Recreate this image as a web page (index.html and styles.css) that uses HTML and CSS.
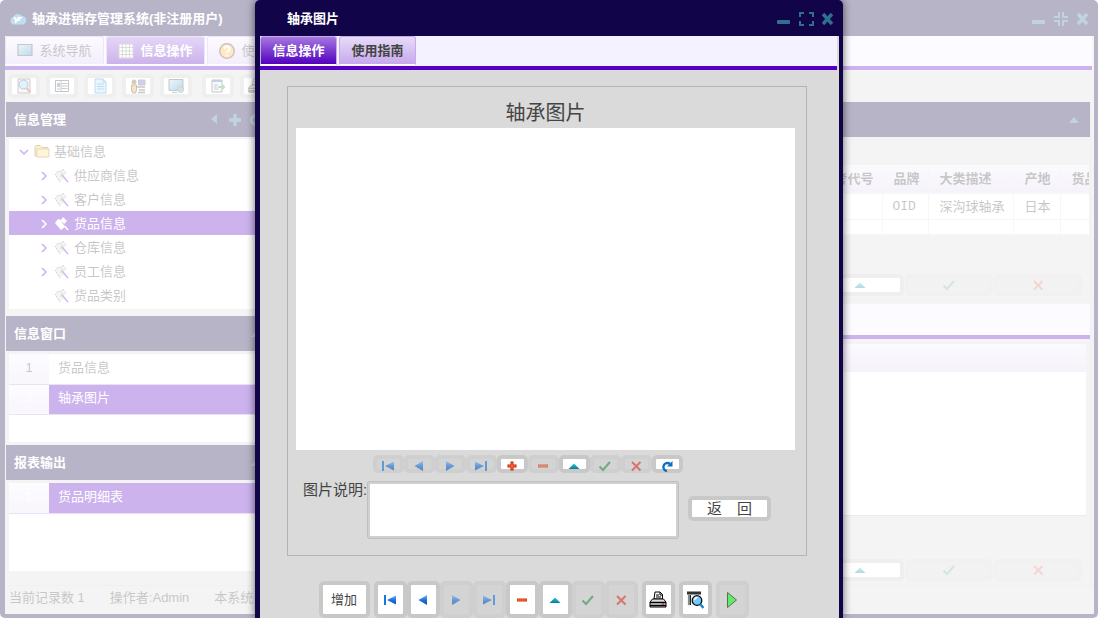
FILE: index.html
```html
<!DOCTYPE html>
<html lang="zh-CN">
<head>
<meta charset="utf-8">
<title>轴承进销存管理系统</title>
<link rel="stylesheet" href="styles.css">
</head>
<body>
<svg class="sprite" aria-hidden="true">
  <defs>
    <linearGradient id="gblue" x1="0" y1="0" x2="0" y2="1"><stop offset="0" stop-color="#6db7f5"/><stop offset=".5" stop-color="#1c74d8"/><stop offset="1" stop-color="#0b4fae"/></linearGradient>
    <linearGradient id="gteal" x1="0" y1="0" x2="0" y2="1"><stop offset="0" stop-color="#2ec4dc"/><stop offset="1" stop-color="#067c96"/></linearGradient>
    <linearGradient id="gscreen" x1="0" y1="0" x2="1" y2="1"><stop offset="0" stop-color="#b5e2fa"/><stop offset="1" stop-color="#2c82be"/></linearGradient>
  </defs>
  <symbol id="first" viewBox="0 0 14 14"><path d="M1 2h2v10H1z" fill="#1478dc"/><path d="M13 2.500v9L4 7z" fill="url(#gblue)"/></symbol>
  <symbol id="prev" viewBox="0 0 14 14"><path d="M11 2v10L2.500 7z" fill="url(#gblue)"/></symbol>
  <symbol id="next" viewBox="0 0 14 14"><path d="M3 2v10l8.500-5z" fill="url(#gblue)"/></symbol>
  <symbol id="last" viewBox="0 0 14 14"><path d="M11 2h2v10h-2z" fill="#1478dc"/><path d="M1 2.500v9L10 7z" fill="url(#gblue)"/></symbol>
  <symbol id="add" viewBox="0 0 14 14"><path d="M5.500 2.500h3v3h3v3h-3v3h-3v-3h-3v-3h3z" fill="#c41e0a"/><path d="M7 3.500v7M3.500 7h7" stroke="#ff8a3c"/></symbol>
  <symbol id="minus" viewBox="0 0 14 14"><path d="M2 5.500h10v3H2z" fill="#c92a06"/><path d="M2.500 7h9" stroke="#ff8a3c"/></symbol>
  <symbol id="up" viewBox="0 0 14 14"><path d="M7 4.500 12.500 10h-11z" fill="url(#gteal)"/></symbol>
  <symbol id="check" viewBox="0 0 14 14"><path d="m1.500 7.500 3.500 3.500 7-8" fill="none" stroke="#2f8f55" stroke-width="2"/></symbol>
  <symbol id="cross" viewBox="0 0 14 14"><path d="m3 3 8.500 8.500m0-8.500-8.500 8.500" fill="none" stroke="#d8392b" stroke-width="2"/></symbol>
  <symbol id="refresh" viewBox="0 0 14 14"><path d="M7 12a4 4 0 1 1 3-7" fill="none" stroke="#0c6fc4" stroke-width="2.400"/><path d="M12.500 2v5.500H7z" fill="#0c6fc4"/></symbol>
  <symbol id="printer" viewBox="0 0 18 18"><path d="M5 8 6 1h5l2.500 2.500V8z" fill="#fff" stroke="#000"/><path d="M7 4h3M7 6h5M11 1v3h3" fill="none" stroke="#000"/><path d="M3.500 8h11l2.500 3v5H1v-5z" fill="#ddd" stroke="#000"/><path d="M1 11.500h16M1 14.500h16" stroke="#000" stroke-width="1.300"/><path d="M13 13h2" stroke="#e00"/></symbol>
  <symbol id="preview" viewBox="0 0 18 18"><path d="M1 1h14v14H1z" fill="#f2f2f2"/><path d="M1 2h14" stroke="#333" stroke-width="3"/><path d="M2 4h2v10H2z" fill="#8a8a8a"/><path d="M4.500 4v10" stroke="#222"/><circle cx="11" cy="9.500" r="4.800" fill="#75c8fa" stroke="#111" stroke-width="1.300"/><path d="M8.500 9a3 3 0 0 1 3-2.500" stroke="#fff" fill="none" stroke-width="1.500"/><path d="m14 13 3.500 4" stroke="#1184cc" stroke-width="2.400"/></symbol>
  <symbol id="play" viewBox="0 0 18 18"><path d="M4.500 1.500v15L13.500 9z" fill="#63ea67" stroke="#57705a"/></symbol>
  <symbol id="min" viewBox="0 0 16 16"><rect x="1" y="9" width="13" height="4" rx="1" fill="currentColor"/></symbol>
  <symbol id="max" viewBox="0 0 16 16"><path d="M2 6V2h4M11 2h4v4M15 10v4h-4M6 14H2v-4" fill="none" stroke="currentColor" stroke-width="2"/></symbol>
  <symbol id="restore" viewBox="0 0 16 16"><path d="M1 6h5V1M10 1v5h5M15 10h-5v5M6 15v-5H1" fill="none" stroke="currentColor" stroke-width="2"/></symbol>
  <symbol id="close" viewBox="0 0 16 16"><path d="m3 3 9 10m0-10-9 10" fill="none" stroke="currentColor" stroke-width="3.400"/></symbol>
  <symbol id="collapse" viewBox="0 0 16 16"><path d="m8 5 5 6H3z" fill="currentColor"/></symbol>
  <symbol id="left" viewBox="0 0 16 16"><path d="M11 2v10L5 7z" fill="currentColor"/></symbol>
  <symbol id="plus" viewBox="0 0 16 16"><path d="M8 2v12M2 8h12" stroke="currentColor" stroke-width="3.400"/></symbol>
  <symbol id="ring" viewBox="0 0 16 16"><circle cx="8" cy="8" r="4.500" fill="none" stroke="currentColor" stroke-width="3"/></symbol>
  <symbol id="screen" viewBox="0 0 16 16"><path d="M1 1.500h14v11H1z" fill="url(#gscreen)" stroke="#444" stroke-width="1.200"/></symbol>
  <symbol id="table" viewBox="0 0 16 16"><rect x="1" y="1" width="14" height="14" fill="#fff" stroke="#888"/><path d="M4.500 1v14M8 1v14M11.500 1v14M1 4.500h14M1 8h14M1 11.500h14" stroke="#888"/></symbol>
  <symbol id="help" viewBox="0 0 16 16"><circle cx="8" cy="8" r="7.300" fill="#fbb53c" stroke="#43231b" stroke-width="1.300"/><path d="M5.500 6a2.500 2.500 0 1 1 3.800 2Q8 8.700 8 10M8 11.500v1.800" fill="none" stroke="#fff" stroke-width="1.900"/></symbol>
  <symbol id="search" viewBox="0 0 16 16"><path d="M2 1h12v14H2z" fill="#e6e6e6" stroke="#555"/><circle cx="7.500" cy="6.500" r="4.500" fill="#92d2f5" stroke="#446"/><path d="m10.500 10 4 4.500" stroke="#c4402d" stroke-width="2.400"/></symbol>
  <symbol id="list" viewBox="0 0 16 16"><path d="M1.500 2.500h13v11h-13z" fill="#fff" stroke="#444"/><path d="M3 5h3v4H3z" fill="#2f6fb5"/><path d="M3 11h3M7.500 5.500h6M7.500 8h6M7.500 10.500h6M7 3v10" stroke="#555"/></symbol>
  <symbol id="doc" viewBox="0 0 16 16"><path d="M3 1h8l3 3v11H3z" fill="#b0e0ff" stroke="#2c86c6"/><path d="M5 6h7M5 8.500h7M5 11h7M11 1v3h3" fill="none" stroke="#2c86c6"/></symbol>
  <symbol id="user" viewBox="0 0 16 16"><circle cx="4" cy="4" r="2.500" fill="#7b4b1c"/><path d="M1.500 7h5v5l-1 3h-3l-1-3z" fill="#e7a03f" stroke="#543611"/><path d="M8.500 2h6.500v5H8.500z" fill="#5a60cc" stroke="#555"/><path d="M7 9h8M9 12h6M8 14.500h7" stroke="#444" stroke-width="1.500"/></symbol>
  <symbol id="globe" viewBox="0 0 16 16"><path d="M1 1.500h14v11H1z" fill="url(#gscreen)" stroke="#444"/><path d="M4 14.500h5" stroke="#555"/><circle cx="12.500" cy="11.500" r="3" fill="#64b95c" stroke="#6d50b4"/></symbol>
  <symbol id="export" viewBox="0 0 16 16"><path d="M2 2h10v12H2z" fill="#eee" stroke="#444"/><path d="M2 3h10" stroke="#266ca0" stroke-width="2"/><path d="M4 7h4M4 9h3M4 11h4" stroke="#555"/><path d="M8 8h4V5.500L15.500 9 12 12.500V10H8z" fill="#2b9f55"/></symbol>
  <symbol id="folder" viewBox="0 0 16 16"><path d="M1 12V2.500L2 1.500h4l2 2h6V12z" fill="#fbc94a" stroke="#8c641b"/><path d="M3 13V5h12v8z" fill="#ffe27a" stroke="#a4751c"/></symbol>
  <symbol id="node" viewBox="0 0 16 16"><path d="m1 7 3-4 3 1 2-3 2 4-2 3 1 3-4 3z" fill="#ddd"/><path d="m1 7 3-4 3 1 2-3 3 4M2 8l4 6" fill="none" stroke="#666" stroke-dasharray="2 1"/><path d="m8 7 6 7" stroke="#7c14c8" stroke-width="1.600"/><path d="M7 9V6h4" stroke="#888" fill="none"/></symbol>
  <symbol id="selnode" viewBox="0 0 16 16"><path d="m1 7 3-4 3 1 2-3 4 4-3 3 1 3-4 3z" fill="#fff"/><path d="m8 7 6 7" stroke="#fff" stroke-width="1.500"/><path d="m8 6 3 4" stroke="#5700c5"/></symbol>
  <symbol id="open" viewBox="0 0 10 10"><path d="m1 3 4 4 4-4" fill="none" stroke="currentColor" stroke-width="1.500"/></symbol>
  <symbol id="closed" viewBox="0 0 10 10"><path d="m3 1 4 4-4 4" fill="none" stroke="currentColor" stroke-width="1.500"/></symbol>
  <symbol id="logo" viewBox="0 0 16 16"><path d="M4 13.500a3.800 3.800 0 0 1-.5-7.500A5 5 0 0 1 12 5a4.200 4.200 0 0 1 0 8.500z" fill="#2795cf"/><path d="m4 6 2.500 4M9 6l-4 6M9 10V8q1-2 3-1" fill="none" stroke="#fff" stroke-width="1.800"/></symbol>
</svg>

<div class="desktop">
  <div class="window">
    <header class="titlebar">
      <svg class="i16"><use href="#logo"/></svg>
      <h1 class="title">轴承进销存管理系统(非注册用户)</h1>
      <div class="win-tools">
        <button class="tool" aria-label="最小化"><svg class="i16"><use href="#min"/></svg></button>
        <button class="tool" aria-label="还原"><svg class="i16"><use href="#restore"/></svg></button>
        <button class="tool" aria-label="关闭"><svg class="i16"><use href="#close"/></svg></button>
      </div>
    </header>
    <nav class="tabs main-tabs">
      <button class="tab plain"><svg class="i16"><use href="#screen"/></svg>系统导航</button>
      <button class="tab active"><svg class="i16"><use href="#table"/></svg>信息操作</button>
      <button class="tab plain"><svg class="i16"><use href="#help"/></svg>使用指南</button>
    </nav>
    <div class="iconbar">
      <button class="btn" aria-label="查询"><svg class="i16"><use href="#search"/></svg></button>
      <button class="btn" aria-label="列表"><svg class="i16"><use href="#list"/></svg></button>
      <button class="btn" aria-label="文档"><svg class="i16"><use href="#doc"/></svg></button>
      <button class="btn" aria-label="用户"><svg class="i16"><use href="#user"/></svg></button>
      <button class="btn" aria-label="网络"><svg class="i16"><use href="#globe"/></svg></button>
      <button class="btn split" aria-label="导出"><svg class="i16"><use href="#export"/></svg></button>
      <button class="btn" aria-label="打印"><svg class="i16"><use href="#printer"/></svg></button>
    </div>
    <div class="workspace">
      <aside class="sidebar">
        <section class="panel tree-panel">
          <header class="panel-head"><h2 class="panel-title">信息管理</h2>
            <button class="tool" aria-label="收起"><svg class="i16"><use href="#left"/></svg></button>
            <button class="tool" aria-label="展开全部"><svg class="i16"><use href="#plus"/></svg></button>
            <button class="tool" aria-label="刷新"><svg class="i16"><use href="#ring"/></svg></button>
          </header>
          <ul class="tree">
            <li class="node root"><svg class="arrow"><use href="#open"/></svg><svg class="i16"><use href="#folder"/></svg>基础信息</li>
            <li class="node"><svg class="arrow"><use href="#closed"/></svg><svg class="i16"><use href="#node"/></svg>供应商信息</li>
            <li class="node"><svg class="arrow"><use href="#closed"/></svg><svg class="i16"><use href="#node"/></svg>客户信息</li>
            <li class="node selected"><svg class="arrow"><use href="#closed"/></svg><svg class="i16"><use href="#selnode"/></svg>货品信息</li>
            <li class="node"><svg class="arrow"><use href="#closed"/></svg><svg class="i16"><use href="#node"/></svg>仓库信息</li>
            <li class="node"><svg class="arrow"><use href="#closed"/></svg><svg class="i16"><use href="#node"/></svg>员工信息</li>
            <li class="node"><svg class="arrow"></svg><svg class="i16"><use href="#node"/></svg>货品类别</li>
          </ul>
        </section>
        <section class="panel">
          <header class="panel-head"><h2 class="panel-title">信息窗口</h2><button class="tool" aria-label="收起"><svg class="i16"><use href="#collapse"/></svg></button></header>
          <div class="list-box">
            <table class="list">
              <tr><td class="num">1</td><td>货品信息</td></tr>
              <tr class="selected"><td class="num">2</td><td>轴承图片</td></tr>
            </table>
          </div>
        </section>
        <section class="panel">
          <header class="panel-head"><h2 class="panel-title">报表输出</h2><button class="tool" aria-label="收起"><svg class="i16"><use href="#collapse"/></svg></button></header>
          <div class="list-box">
            <table class="list">
              <tr class="selected"><td class="num">1</td><td>货品明细表</td></tr>
            </table>
          </div>
        </section>
      </aside>
      <main class="content">
        <section class="card">
          <header class="panel-head"><button class="tool" aria-label="收起"><svg class="i16"><use href="#collapse"/></svg></button></header>
          <div class="grid-box">
            <table class="grid">
              <colgroup><col><col class="c-brand"><col class="c-desc"><col class="c-origin"><col class="c-rest"></colgroup>
              <thead><tr><th class="end">参考代号</th><th>品牌</th><th>大类描述</th><th>产地</th><th>货品</th></tr></thead>
              <tbody>
                <tr><td></td><td class="code">OID</td><td>深沟球轴承</td><td>日本</td><td></td></tr>
                <tr class="short"><td></td><td></td><td></td><td></td><td></td></tr>
              </tbody>
            </table>
          </div>
          <div class="wide-actions">
            <button class="btn" aria-label="编辑"><svg class="i14"><use href="#up"/></svg></button>
            <button class="btn" disabled aria-label="保存"><svg class="i14"><use href="#check"/></svg></button>
            <button class="btn" disabled aria-label="取消"><svg class="i14"><use href="#cross"/></svg></button>
          </div>
        </section>
        <section class="card detail">
          <div class="tabs sub-tabs"></div>
          <div class="detail-grid"><div class="detail-head"></div></div>
          <div class="wide-actions">
            <button class="btn" aria-label="编辑明细"><svg class="i14"><use href="#up"/></svg></button>
            <button class="btn" disabled aria-label="保存明细"><svg class="i14"><use href="#check"/></svg></button>
            <button class="btn" disabled aria-label="取消明细"><svg class="i14"><use href="#cross"/></svg></button>
          </div>
        </section>
      </main>
    </div>
    <footer class="status"><span>当前记录数 1</span><span>操作者:Admin</span><span>本系统</span></footer>
  </div>

  <div class="backdrop">
    <div class="dialog" role="dialog" aria-labelledby="dlg-title">
      <header class="titlebar dialog-bar">
        <h2 class="title" id="dlg-title">轴承图片</h2>
        <div class="win-tools">
          <button class="tool" aria-label="最小化"><svg class="i16"><use href="#min"/></svg></button>
          <button class="tool" aria-label="最大化"><svg class="i16"><use href="#max"/></svg></button>
          <button class="tool" aria-label="关闭"><svg class="i16"><use href="#close"/></svg></button>
        </div>
      </header>
      <nav class="tabs dialog-tabs">
        <button class="tab active">信息操作</button>
        <button class="tab">使用指南</button>
      </nav>
      <div class="dialog-body">
        <div class="frame">
          <h3 class="heading">轴承图片</h3>
          <div class="picture"></div>
          <div class="mini-bar">
            <button class="btn" disabled aria-label="首条"><svg class="i14"><use href="#first"/></svg></button>
            <button class="btn" disabled aria-label="上一条"><svg class="i14"><use href="#prev"/></svg></button>
            <button class="btn" disabled aria-label="下一条"><svg class="i14"><use href="#next"/></svg></button>
            <button class="btn" disabled aria-label="末条"><svg class="i14"><use href="#last"/></svg></button>
            <button class="btn" aria-label="新增"><svg class="i14"><use href="#add"/></svg></button>
            <button class="btn" disabled aria-label="删除"><svg class="i14"><use href="#minus"/></svg></button>
            <button class="btn" aria-label="编辑"><svg class="i14"><use href="#up"/></svg></button>
            <button class="btn" disabled aria-label="保存"><svg class="i14"><use href="#check"/></svg></button>
            <button class="btn" disabled aria-label="取消"><svg class="i14"><use href="#cross"/></svg></button>
            <button class="btn" aria-label="刷新"><svg class="i14"><use href="#refresh"/></svg></button>
          </div>
          <div class="note-row">
            <label class="note-label" for="note">图片说明:</label>
            <textarea class="note" id="note"></textarea>
            <button class="btn back"><span>返</span><span>回</span></button>
          </div>
        </div>
        <div class="action-bar">
          <button class="btn text">增加</button>
          <button class="btn" aria-label="首条记录"><svg class="i14"><use href="#first"/></svg></button>
          <button class="btn" aria-label="上一条记录"><svg class="i14"><use href="#prev"/></svg></button>
          <button class="btn" disabled aria-label="下一条记录"><svg class="i14"><use href="#next"/></svg></button>
          <button class="btn" disabled aria-label="末条记录"><svg class="i14"><use href="#last"/></svg></button>
          <button class="btn" aria-label="删除记录"><svg class="i14"><use href="#minus"/></svg></button>
          <button class="btn" aria-label="编辑记录"><svg class="i14"><use href="#up"/></svg></button>
          <button class="btn" disabled aria-label="保存记录"><svg class="i14"><use href="#check"/></svg></button>
          <button class="btn" disabled aria-label="取消编辑"><svg class="i14"><use href="#cross"/></svg></button>
          <button class="btn apart" aria-label="打印"><svg class="i18"><use href="#printer"/></svg></button>
          <button class="btn apart" aria-label="预览"><svg class="i18"><use href="#preview"/></svg></button>
          <button class="btn apart run" aria-label="运行"><svg class="i18"><use href="#play"/></svg></button>
        </div>
      </div>
    </div>
  </div>
</div>
</body>
</html>
```
FILE: styles.css
```css
:root {
  --navy: #110449;
  --violet: #5400c4;
  --grey: #dadada;
  --edge: #c8c8c8;
  --teal: #2f708f;
}
* { box-sizing: border-box; }
body {
  margin: 0;
  background: #fff;
  color: #444;
  font: 13px/16px "Liberation Sans", "Noto Sans CJK SC", sans-serif;
}
h1, h2, h3, ul { margin: 0; padding: 0; font-size: inherit; }
button { font: inherit; color: inherit; margin: 0; padding: 0; border: 0; background: none; }
svg { display: block; flex: none; }
.sprite { position: absolute; width: 0; height: 0; }
.i14 { width: 14px; height: 14px; }
.i16 { width: 16px; height: 16px; }
.i18 { width: 18px; height: 18px; }

.desktop { position: relative; height: calc(100vh - 7px); min-height: 600px; overflow: hidden; }
.window {
  display: flex;
  flex-direction: column;
  height: 100%;
  margin-right: 1px;
  background: var(--grey);
  border: solid var(--navy);
  border-width: 0 4px 4px 5px;
  border-radius: 5px;
}

.titlebar {
  display: flex;
  align-items: center;
  gap: 6px;
  flex: none;
  height: 36px;
  padding: 2px 3px 0 5px;
  background: var(--navy);
  color: #fff;
}
.title { flex: 1; font-weight: bold; }
.win-tools { display: flex; gap: 6px; color: var(--teal); }
.tool { color: var(--teal); }

.tabs {
  display: flex;
  gap: 2px;
  flex: none;
  height: 34px;
  margin-right: 2px;
  background: #f5f2ff;
  border-bottom: 4px solid var(--violet);
}
.tab {
  display: flex;
  align-items: center;
  justify-content: center;
  gap: 6px;
  width: 77px;
  height: 29px;
  border: 1px solid #c7a9ec;
  border-bottom-color: #fff;
  border-radius: 3px 3px 0 0;
  background: linear-gradient(#e6dcf7, #c7a8ed);
  font-weight: bold;
}
.tab.active { background: linear-gradient(#a678e0, #5100bd); color: #fff; }
.main-tabs .tab { width: 99px; font-weight: normal; }
.main-tabs .active { font-weight: bold; }
.tab.plain { background: linear-gradient(#f3effe, #d8c6f3); }

.btn {
  display: flex;
  align-items: center;
  justify-content: center;
  flex: none;
  overflow: hidden;
  background: #fff;
  border: 4px solid var(--edge);
  border-radius: 5px;
}
.btn:disabled, .run { background: #d4d4d4; border-color: #cfcfcf; }
.btn:disabled svg { opacity: .6; }

.iconbar { display: flex; gap: 6px; flex: none; padding: 4px 3px; height: 32px; }
.iconbar .btn { width: 32px; height: 24px; }
.iconbar .split { margin-left: 4px; }

.workspace { display: flex; gap: 4px; flex: 1; min-height: 0; padding: 0 3px 0 1px; }
.sidebar { display: flex; flex-direction: column; gap: 3px; flex: none; width: 266px; }
.panel-head {
  display: flex;
  align-items: center;
  justify-content: flex-end;
  gap: 5px;
  height: 35px;
  padding: 0 8px;
  background: var(--navy);
  color: #fff;
}
.panel-title { flex: 1; }
.tree { list-style: none; margin: 2px 3px 4px; padding-bottom: 2px; background: #fff; }
.node { display: flex; align-items: center; gap: 4px; height: 24px; padding: 2px 0 0 29px; }
.node.root { padding-left: 9px; }
.node .arrow { width: 12px; height: 12px; padding: 1px; color: var(--violet); }
.selected { background: var(--violet); color: #fff; }
.node.selected .arrow { color: #fff; }
.list-box { height: 88px; margin: 3px 3px 0; background: #fff; }
.list { width: 100%; border-collapse: collapse; }
.list td { height: 30px; padding: 0 9px 2px; border-bottom: 1px solid #b79be5; }
.list .num { width: 40px; text-align: center; background: linear-gradient(#f7f4ff, #e9e0f6); }

.content { display: flex; flex-direction: column; gap: 3px; flex: 1; min-width: 0; }
.card { border: 1px solid #ccc; border-width: 0 1px 1px 0; }
.grid-box { margin: 28px 1px 0; overflow: hidden; background: #fff; }
.grid { width: 100%; table-layout: fixed; border-collapse: collapse; }
.grid th { height: 28px; text-align: left; background: linear-gradient(#f1edfc, #dfd7ee); }
.grid th, .grid td { padding: 0 0 0 11px; overflow: hidden; white-space: nowrap; border: 1px solid #e6e0f0; border-width: 0 0 1px 1px; }
.grid .end { text-align: right; padding-right: 8px; }
.grid td { height: 26px; padding-top: 2px; }
.grid .code { padding-left: 10px; font-family: "Liberation Mono", monospace; }
.grid .short td { height: 15px; }
.c-brand { width: 46px; }
.c-desc { width: 85px; }
.c-origin { width: 47px; }
.c-rest { width: 29px; }
.wide-actions { display: flex; justify-content: flex-end; gap: 1px; padding: 0 8px 4px; }
.wide-actions .btn { width: 88px; height: 22px; }
.card:first-child .wide-actions { margin-top: 39px; }
.detail { display: flex; flex-direction: column; flex: none; }
.sub-tabs { height: 35px; margin-right: 0; }
.detail-grid { height: 172px; margin: 5px 4px 43px 0; background: #fff; border-bottom: 1px solid #bbb; }
.detail-head { height: 28px; background: linear-gradient(#f1edfc, #dfd7ee); }
.status { display: flex; gap: 25px; flex: none; height: 29px; padding: 4px 4px; border-top: 1px solid #ccc; }

.backdrop {
  position: absolute;
  inset: 0;
  display: flex;
  justify-content: center;
  padding-right: 1px;
  background: rgba(255, 255, 255, .7);
}
.dialog {
  display: flex;
  flex-direction: column;
  width: 588px;
  background: var(--grey);
  border: solid var(--navy);
  border-width: 0 4px 0 5px;
  border-radius: 5px 5px 0 0;
  box-shadow: 0 0 8px rgba(0, 0, 0, .6);
}
.dialog-bar { padding-left: 27px; }
.dialog-body { display: flex; flex-direction: column; gap: 25px; padding: 16px 32px 0 27px; }
.frame { display: flex; flex-direction: column; height: 470px; padding: 11px 11px 16px 8px; border: 1px solid #b4b4b4; }
.heading { font-size: 20px; line-height: 30px; font-weight: normal; text-align: center; }
.picture { flex: 1; background: #fff; }
.mini-bar { display: flex; justify-content: center; padding: 5px 0 8px; margin-right: 36px; align-self: center; }
.mini-bar .btn { width: 31px; height: 18px; align-items: flex-start; overflow: visible; }
.note-row { display: flex; padding-left: 7px; font-size: 15px; }
.note-label { width: 64px; line-height: 18px; white-space: nowrap; }
.note {
  width: 312px;
  height: 58px;
  resize: none;
  background: #fff;
  border: 3px solid #d0d0d0;
  border-radius: 3px;
  outline: 1px solid #bfbfbf;
  outline-offset: -1px;
}
.back { gap: 15px; width: 83px; height: 25px; margin: 15px 0 0 9px; }
.action-bar { display: flex; justify-content: center; margin-right: 27px; }
.action-bar .btn { width: 33px; height: 37px; }
.action-bar .text { width: 51px; margin-right: 4px; }
.action-bar .apart { margin-left: 4px; }
```
